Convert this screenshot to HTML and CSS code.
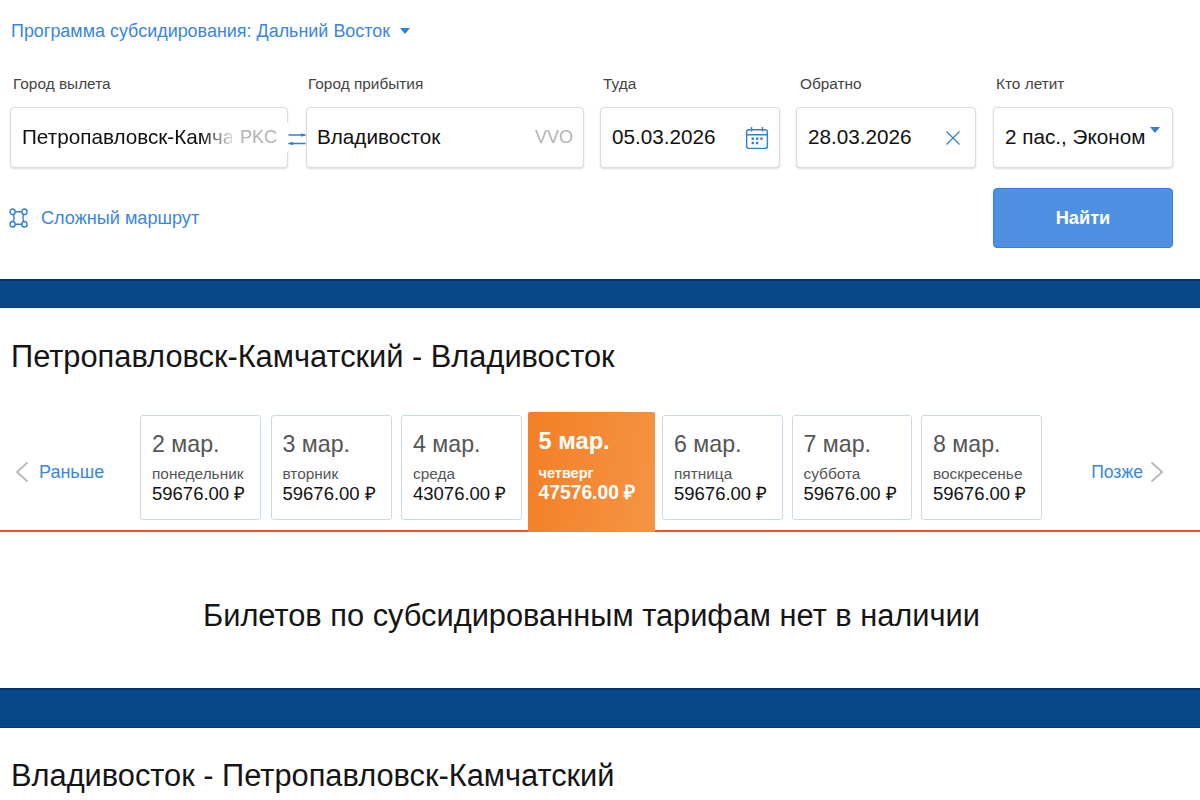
FILE: index.html
```html
<!DOCTYPE html>
<html lang="ru">
<head>
<meta charset="utf-8">
<title>Субсидированные билеты</title>
<link rel="stylesheet" href="styles.css">
</head>
<body>
<section class="search">
  <div class="program"><span>Программа субсидирования: Дальний Восток</span><i class="caret"></i></div>
  <div class="fields">
    <div class="field city">
      <label>Город вылета</label>
      <div class="box"><span class="val fade">Петропавловск-Камчатский</span><span class="code">PKC</span></div>
      <svg class="swap" width="20" height="29" viewBox="0 0 20 29"><path d="M1.500 12h17M1.500 20.500h17" fill="none" stroke="#2f7fd6" stroke-width="1.500"/><path d="M14 10.200 19 12l-5 1.800zM6 18.700 1 20.500l5 1.800z" fill="#2f7fd6"/></svg>
    </div>
    <div class="field city">
      <label>Город прибытия</label>
      <div class="box"><span class="val">Владивосток</span><span class="code">VVO</span></div>
    </div>
    <div class="field date">
      <label>Туда</label>
      <div class="box"><span class="val">05.03.2026</span>
        <svg class="ico" width="24" height="24" viewBox="0 0 22 22"><g fill="none" stroke="#2f7fd6" stroke-width="1.300"><rect x="1.500" y="3.500" width="19" height="17" rx="2"/><path d="M1.500 8h19M6 1v4M16 1v4"/></g><g fill="#2f7fd6"><rect x="6" y="10.500" width="2.200" height="2.200"/><rect x="10" y="10.500" width="2.200" height="2.200"/><rect x="14" y="10.500" width="2.200" height="2.200"/><rect x="6" y="14.500" width="2.200" height="2.200"/><rect x="10" y="14.500" width="2.200" height="2.200"/></g></svg>
      </div>
    </div>
    <div class="field date">
      <label>Обратно</label>
      <div class="box"><span class="val">28.03.2026</span>
        <svg class="ico close" width="22" height="22" viewBox="0 0 22 22"><path d="M4.500 4.500l13 13M17.500 4.500l-13 13" fill="none" stroke="#2f7fd6" stroke-width="1.200"/></svg>
      </div>
    </div>
    <div class="field who">
      <label>Кто летит</label>
      <div class="box"><span class="val">2 пас., Эконом</span><i class="caret small"></i></div>
    </div>
  </div>
  <div class="actions">
    <a class="route"><svg width="19" height="20" viewBox="0 0 24 24" preserveAspectRatio="none"><g fill="none" stroke="#2f7fd6" stroke-width="1.800"><circle cx="4.500" cy="4.500" r="3.300"/><circle cx="19.500" cy="4.500" r="3.300"/><circle cx="4.500" cy="19.500" r="3.300"/><circle cx="19.500" cy="19.500" r="3.300"/><path d="M7.800 4.500h8.400M7.800 19.500h8.400M5.500 7.800c1.500 3 1.500 5.400 0 8.400M18.500 7.800c-1.500 3-1.500 5.400 0 8.400"/></g></svg><span>Сложный маршрут</span></a>
    <button class="find" type="button">Найти</button>
  </div>
</section>
<div class="band band-a"></div>
<h2 class="title first">Петропавловск-Камчатский - Владивосток</h2>
<div class="carousel">
  <a class="nav prev"><svg width="14" height="22" viewBox="0 0 14 22"><path d="M12.500 1.500 2 11l10.500 9.500" fill="none" stroke="#b9bcbf" stroke-width="2"/></svg><span>Раньше</span></a>
  <div class="days">
    <div class="day"><b>2 мар.</b><em>понедельник</em><strong>59676.00 ₽</strong></div>
    <div class="day"><b>3 мар.</b><em>вторник</em><strong>59676.00 ₽</strong></div>
    <div class="day"><b>4 мар.</b><em>среда</em><strong>43076.00 ₽</strong></div>
    <div class="day active"><b>5 мар.</b><em>четверг</em><strong>47576.00 ₽</strong></div>
    <div class="day"><b>6 мар.</b><em>пятница</em><strong>59676.00 ₽</strong></div>
    <div class="day"><b>7 мар.</b><em>суббота</em><strong>59676.00 ₽</strong></div>
    <div class="day"><b>8 мар.</b><em>воскресенье</em><strong>59676.00 ₽</strong></div>
  </div>
  <a class="nav next"><span>Позже</span><svg width="14" height="22" viewBox="0 0 14 22"><path d="M1.500 1.500 12 11 1.500 20.500" fill="none" stroke="#b9bcbf" stroke-width="2"/></svg></a>
</div>
<p class="none">Билетов по субсидированным тарифам нет в наличии</p>
<div class="band band-b"></div>
<h2 class="title second">Владивосток - Петропавловск-Камчатский</h2>
</body>
</html>
```
FILE: styles.css
```css
* { box-sizing: border-box; }
html, body { margin: 0; height: 800px; overflow: hidden; }
body { background: #fff; font-family: "Liberation Sans", Arial, sans-serif; color: #111; }
.search { height: 279px; padding: 0 27px 0 10px; }
.program { height: 61px; padding: 21px 0 0 1px; display: flex; align-items: flex-start; gap: 10px; color: #3a86e0; font-size: 17.950px; line-height: 20px; }
.caret { width: 0; height: 0; border-left: 5px solid transparent; border-right: 5px solid transparent; border-top: 6px solid #2f7fd6; margin-top: 7px; }
.fields { display: flex; height: 107px; }
.field { display: flex; flex-direction: column; position: relative; }
.city { width: 278px; margin-right: 18px; }
.city + .city { margin-right: 16px; }
.date { width: 180px; margin-right: 16px; }
.date + .date { margin-right: 17px; }
.who { width: 180px; margin-right: 0; }
.field label { height: 46px; padding: 14px 0 0 3px; font-size: 15.400px; line-height: 18px; color: #444; }
.city + .city label { padding-left: 2px; }
.date + .date label { padding-left: 4px; }
.box { height: 61px; border: 1px solid #dcdcdc; border-radius: 4px; box-shadow: 0 1px 2px rgba(0,0,0,.14); display: flex; align-items: center; padding: 0 10px 0 11px; font-size: 20.700px; background: #fff; }
.city + .city .box { padding-left: 10px; }
.val { white-space: nowrap; line-height: 24px; margin-top: -2px; }
.city .val { flex: 1; overflow: hidden; }
.fade { -webkit-mask-image: linear-gradient(90deg, #000 85%, rgba(0,0,0,.15) 100%); mask-image: linear-gradient(90deg, #000 85%, rgba(0,0,0,.15) 100%); }
.code { color: #b4b4b4; font-size: 18px; margin-left: 8px; }
.ico { margin-left: auto; }
.ico.close { margin-right: 1px; }
.who .box { padding-right: 0; position: relative; }
.caret.small { position: absolute; right: 12px; top: 19px; margin: 0; }
.swap { position: absolute; left: 277px; top: 62px; background: #fff; }
.actions { display: flex; justify-content: space-between; align-items: flex-start; padding-top: 20px; }
.route { display: flex; align-items: center; gap: 13px; color: #3a86e0; font-size: 18.100px; height: 32px; margin: 14px 0 0 -1px; }
.find { width: 180px; height: 60px; border: 1px solid #3482dc; border-radius: 4px; background: #4f90e2; color: #fff; font: bold 18.200px "Liberation Sans", Arial, sans-serif; }
.band { background: #08478a; border-top: 2px solid #04326c; border-bottom: 1px solid #063a78; }
.band-a { height: 29px; }
.band-b { height: 40px; }
.title { margin: 0; padding-left: 11px; font-weight: 400; font-size: 30.800px; line-height: 34px; color: #151515; }
.title.first { padding-top: 32px; height: 104px; }
.title.second { padding-top: 31px; }
.carousel { display: flex; align-items: flex-start; border-bottom: 2px solid #ee5220; position: relative; height: 120px; }
.nav { display: flex; align-items: center; gap: 10px; color: #3a86e0; font-size: 18px; position: absolute; top: 49px; }
.prev { left: 15px; }
.next { right: 36px; gap: 7px; font-size: 17.600px; }
.days { display: flex; align-items: flex-start; margin-left: 140px; height: 120px; }
.day { width: 121px; height: 105px; margin: 3px 9.500px 0 0; border: 1px solid #c9d9ea; border-radius: 3px; padding: 15px 0 0 11px; display: flex; flex-direction: column; background: #fff; }
.day b { font-weight: 400; font-size: 23.200px; line-height: 26px; color: #555; }
.day em { font-style: normal; font-size: 15.400px; line-height: 17px; color: #555; margin-top: 8px; }
.day strong { font-weight: 400; font-size: 18.500px; line-height: 20px; color: #111; margin-top: 2px; }
.day.active { width: 126.500px; height: 120px; margin: 0 7.500px 0 -3.500px; border: 0; border-radius: 2px 2px 0 0; padding: 16px 0 0 10.500px; background: linear-gradient(100deg, #f37f25, #f59445); color: #fff; position: relative; }
.day.active ~ .day { width: 120.500px; margin-right: 9px; }
.day.active b { font-weight: 700; color: #fff; font-size: 23.700px; }
.day.active em { font-weight: 700; color: #fff; font-size: 14.500px; margin-top: 11px; }
.day.active strong { font-weight: 700; color: #fff; font-size: 19.300px; margin-top: 1px; }
.none { margin: 0 17px 0 0; height: 156px; padding-top: 67px; text-align: center; font-size: 30.800px; line-height: 34px; color: #151515; }
```
